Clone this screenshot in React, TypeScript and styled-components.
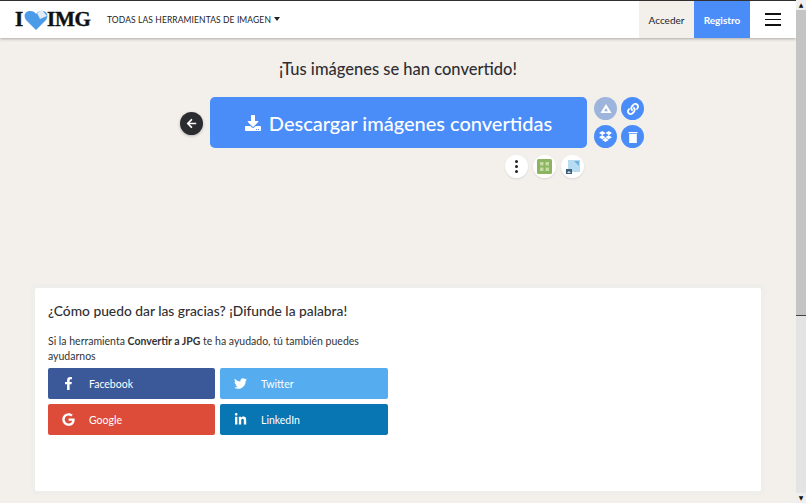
import styled, { createGlobalStyle } from "styled-components";
import { FaFacebookF, FaTwitter, FaGoogle, FaLinkedinIn, FaDropbox, FaLink, FaArrowLeft, FaDownload } from "react-icons/fa";

const GlobalStyle = createGlobalStyle`
  html, body { margin: 0; padding: 0; height: 100%; overflow: hidden; }
  body { background: #f3f0ec; font-family: "Lato", "Liberation Sans", sans-serif; color: #2f2f33; }
  * { box-sizing: border-box; }
`;

const Page = styled.div`
  display: flex;
  width: 806px;
  height: 503px;
`;

const Main = styled.div`
  width: 796px;
  display: flex;
  flex-direction: column;
  border-top: 1px solid #333;
`;

const Scrollbar = styled.div`
  width: 10px;
  display: flex;
  flex-direction: column;
  background: #e4e4e4;
`;

const ScrollArrow = styled.div`
  height: 10px;
  background: #efefef;
  color: #111;
  font-size: 6px;
  line-height: 10px;
  text-align: center;
  font-family: "DejaVu Sans", sans-serif;
`;

const ScrollThumb = styled.div`
  height: 306px;
  background: #c4c4c4;
  border-bottom: 1px solid #444;
`;

const ScrollTrack = styled.div`
  flex: 1;
`;

const Header = styled.header`
  height: 37px;
  background: #fff;
  display: flex;
  align-items: stretch;
  box-shadow: 0 1px 3px rgba(0, 0, 0, 0.3);
`;

const Logo = styled.div`
  display: flex;
  align-items: center;
  margin-left: 15px;
  width: 92px;
  font-family: "Liberation Serif", serif;
  font-weight: 700;
  font-size: 21px;
  color: #111;
  letter-spacing: -0.2px;
  -webkit-text-stroke: 0.4px #111;
`;

const Heart = styled.svg`
  width: 24px;
  height: 20px;
  margin: 0 -1px 0 1px;
`;

const Menu = styled.div`
  display: flex;
  align-items: center;
  gap: 3px;
  padding-top: 1px;
  font-size: 8.5px;
  letter-spacing: 0.1px;
  color: #222;
  flex: 1;
`;

const Caret = styled.span`
  width: 0;
  height: 0;
  margin-bottom: 2px;
  border-left: 3.5px solid transparent;
  border-right: 3.5px solid transparent;
  border-top: 4px solid #222;
`;

const AuthLink = styled.div<{ $primary?: boolean }>`
  width: ${(p) => (p.$primary ? 56 : 55)}px;
  display: flex;
  align-items: center;
  justify-content: center;
  font-size: 10px;
  font-weight: ${(p) => (p.$primary ? 700 : 400)};
  color: ${(p) => (p.$primary ? "#fff" : "#222")};
  background: ${(p) => (p.$primary ? "#4b8df8" : "#f3f0ec")};
`;

const Burger = styled.div`
  width: 46px;
  display: flex;
  flex-direction: column;
  align-items: center;
  justify-content: center;
  gap: 4px;
`;

const BurgerLine = styled.span`
  width: 16px;
  height: 1.5px;
  background: #111;
`;

const Title = styled.h2`
  margin: 21px 0 0;
  height: 20px;
  text-align: center;
  font-size: 16.5px;
  line-height: 20px;
  font-weight: 500;
  color: #2f2f33;
`;

const ActionArea = styled.div`
  display: flex;
  margin: 18px 0 0 180px;
  height: 51px;
  align-items: center;
`;

const BackButton = styled.div`
  width: 23px;
  height: 23px;
  border-radius: 50%;
  background: #2a2c30;
  color: #fff;
  display: flex;
  align-items: center;
  justify-content: center;
  font-size: 11px;
  margin: 2px 7px 0 0;
  box-shadow: 0 1px 3px rgba(0, 0, 0, 0.25);
`;

const DownloadButton = styled.div`
  width: 377px;
  height: 51px;
  background: #4b8df8;
  border-radius: 5px;
  color: #fff;
  display: flex;
  align-items: center;
  justify-content: center;
  gap: 8px;
  font-size: 20px;
  font-weight: 500;
`;

const CircleGrid = styled.div`
  display: grid;
  grid-template-columns: 23px 23px;
  gap: 5px 4px;
  margin-left: 7px;
`;

const CircleButton = styled.div<{ $faded?: boolean }>`
  width: 23px;
  height: 23px;
  border-radius: 50%;
  background: ${(p) => (p.$faded ? "#9db5dc" : "#4b8df8")};
  color: #fff;
  display: flex;
  align-items: center;
  justify-content: center;
  font-size: 11px;
`;

const ToolRow = styled.div`
  display: flex;
  gap: 5px;
  margin: 7px 0 0 505px;
`;

const ToolButton = styled.div`
  width: 23px;
  height: 23px;
  border-radius: 50%;
  background: #fff;
  display: flex;
  align-items: center;
  justify-content: center;
  box-shadow: 0 1px 2px rgba(0, 0, 0, 0.1);
`;

const Dots = styled.div`
  display: flex;
  flex-direction: column;
  gap: 2px;
`;

const Dot = styled.span`
  width: 3px;
  height: 3px;
  border-radius: 50%;
  background: #222;
`;

const Card = styled.section`
  margin: 110px 0 0 35px;
  width: 726px;
  height: 203px;
  background: #fff;
  border-radius: 2px;
  box-shadow: 0 0 0 4px #f0eeea;
  padding: 14px 13px;
`;

const CardTitle = styled.h3`
  margin: 0;
  font-size: 13.8px;
  line-height: 17px;
  font-weight: 500;
  color: #2f2f33;
`;

const CardText = styled.p`
  margin: 15px 0 0;
  width: 340px;
  font-size: 10.5px;
  line-height: 15px;
  color: #333;
`;

const SocialGrid = styled.div`
  display: grid;
  grid-template-columns: 167px 168px;
  grid-auto-rows: 31px;
  gap: 5px;
  margin-top: 4px;
`;

const SocialButton = styled.div<{ $color: string }>`
  background: ${(p) => p.$color};
  border-radius: 2px;
  color: #fff;
  display: flex;
  align-items: center;
  font-size: 10.5px;
`;

const SocialIcon = styled.span`
  width: 41px;
  display: flex;
  justify-content: center;
  font-size: 13px;
`;

const socials = [
  { name: "Facebook", color: "#3b5998", Icon: FaFacebookF },
  { name: "Twitter", color: "#55acee", Icon: FaTwitter },
  { name: "Google", color: "#dd4b39", Icon: FaGoogle },
  { name: "LinkedIn", color: "#0976b4", Icon: FaLinkedinIn },
];

const App = () => {
  return (
    <Page>
      <GlobalStyle />
      <Main>
        <Header>
          <Logo>
            I
            <Heart viewBox="0 0 24 20">
              <path d="M12 20 L2 10 C-1 6 1 1 6 1 C9 1 11 2 12 4 C13 2 15 1 18 1 C23 1 25 6 22 10 Z" fill="#4b9be8" />
              <path d="M13 3 L18 0 L23 6 L16 9 Z" fill="#e3ecf6" />
            </Heart>
            IMG
          </Logo>
          <Menu>
            TODAS LAS HERRAMIENTAS DE IMAGEN
            <Caret />
          </Menu>
          <AuthLink>Acceder</AuthLink>
          <AuthLink $primary>Registro</AuthLink>
          <Burger>
            <BurgerLine />
            <BurgerLine />
            <BurgerLine />
          </Burger>
        </Header>
        <Title>¡Tus imágenes se han convertido!</Title>
        <ActionArea>
          <BackButton>
            <FaArrowLeft />
          </BackButton>
          <DownloadButton>
            <FaDownload size={16} />
            Descargar imágenes convertidas
          </DownloadButton>
          <CircleGrid>
            <CircleButton $faded>
              <svg width="12" height="11" viewBox="0 0 12 11">
                <path d="M6 1 L11.5 10 H0.5 Z M6 5 L4 8.2 H8 Z" fill="#fff" fillRule="evenodd" />
              </svg>
            </CircleButton>
            <CircleButton>
              <FaLink size={12} />
            </CircleButton>
            <CircleButton>
              <FaDropbox size={13} />
            </CircleButton>
            <CircleButton>
              <svg width="10" height="12" viewBox="0 0 10 12">
                <path d="M0.5 1h9v1.2h-9z M1.2 3h7.6v9H1.2z" fill="#fff" />
              </svg>
            </CircleButton>
          </CircleGrid>
        </ActionArea>
        <ToolRow>
          <ToolButton>
            <Dots>
              <Dot />
              <Dot />
              <Dot />
            </Dots>
          </ToolButton>
          <ToolButton>
            <svg width="15" height="15" viewBox="0 0 15 15">
              <rect width="15" height="15" rx="1.5" fill="#8cb561" />
              <path d="M3 3h3.5v3.5H3z M8.5 3H12v3.5H8.5z M3 8.5h3.5V12H3z M8.5 8.5H12V12H8.5z" fill="#c4dca2" />
            </svg>
          </ToolButton>
          <ToolButton>
            <svg width="16" height="16" viewBox="0 0 16 16">
              <path d="M3 1h12v12H3z" fill="#b7dcf1" />
              <path d="M9 2h5v5z" fill="#6fb2de" />
              <path d="M1 10h6v5H1z" fill="#3f5f78" />
              <path d="M2 14l2-2 2 2z" fill="#d5e6f0" />
            </svg>
          </ToolButton>
        </ToolRow>
        <Card>
          <CardTitle>¿Cómo puedo dar las gracias? ¡Difunde la palabra!</CardTitle>
          <CardText>
            Si la herramienta <b>Convertir a JPG</b> te ha ayudado, tú también puedes ayudarnos
          </CardText>
          <SocialGrid>
            {socials.map(({ name, color, Icon }) => (
              <SocialButton key={name} $color={color}>
                <SocialIcon>
                  <Icon />
                </SocialIcon>
                {name}
              </SocialButton>
            ))}
          </SocialGrid>
        </Card>
      </Main>
      <Scrollbar>
        <ScrollArrow>▲</ScrollArrow>
        <ScrollThumb />
        <ScrollTrack />
        <ScrollArrow>▼</ScrollArrow>
      </Scrollbar>
    </Page>
  );
};

export default App;
